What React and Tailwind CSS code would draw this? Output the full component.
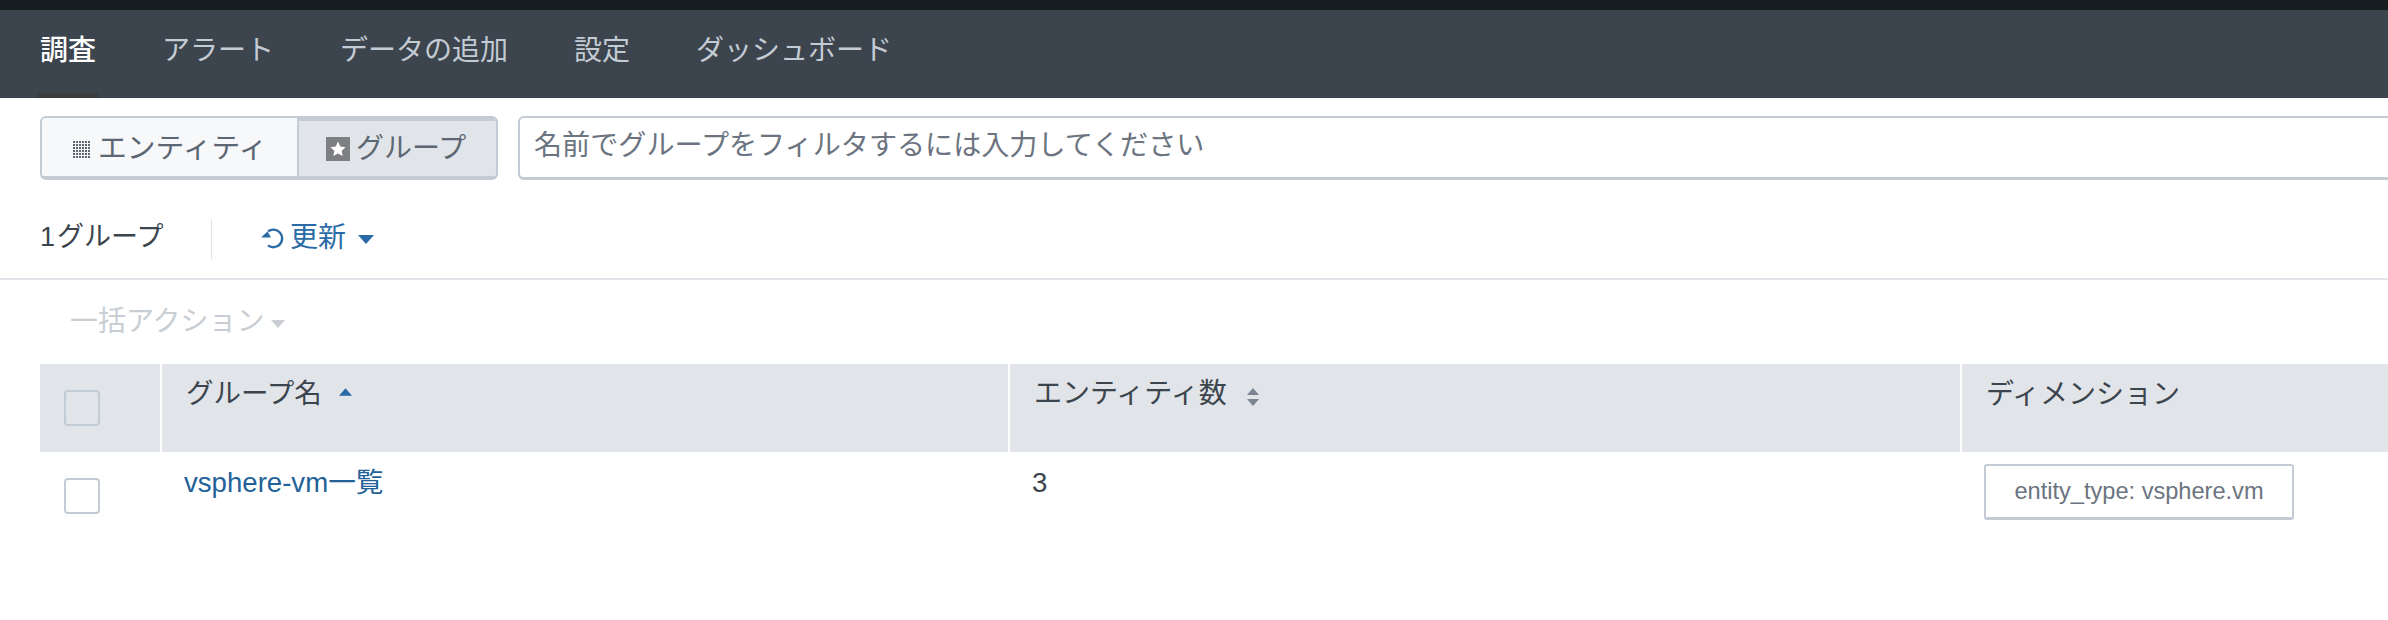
const font = { fontFamily: '"Liberation Sans", "Noto Sans CJK JP", sans-serif' };

function Caret({ className }) {
  return (
    <svg viewBox="0 0 16 9" className={className}>
      <path d="M0 0H16L8 9Z" fill="currentColor" />
    </svg>
  );
}

function GridIcon() {
  const dots = [];
  for (let y = 0; y < 6; y++) {
    for (let x = 0; x < 6; x++) {
      dots.push(<rect key={`${x}-${y}`} x={x * 3} y={y * 3} width="2" height="2" fill="#5c6773" />);
    }
  }
  return (
    <svg viewBox="0 0 17 17" className="w-[17px] h-[17px] shrink-0">
      {dots}
    </svg>
  );
}

function StarIcon() {
  return (
    <svg viewBox="0 0 24 24" className="w-6 h-6 shrink-0">
      <rect width="24" height="24" fill="#7d7f82" />
      <path d="M12 4.6l2.3 4.9 5.3.7-3.9 3.6 1 5.3-4.7-2.6-4.7 2.6 1-5.3-3.9-3.6 5.3-.7z" fill="#ffffff" />
    </svg>
  );
}

function RefreshIcon() {
  return (
    <svg viewBox="0 0 24 24" className="w-[24px] h-[24px] shrink-0" fill="none">
      <path d="M7 5.4A8.8 8.8 0 1 1 7 19.4" stroke="#2a6aa6" strokeWidth="2.4" />
      <path d="M0 11.5H10L6.5 5.5Z" fill="#2a6aa6" />
    </svg>
  );
}

function SortBoth() {
  return (
    <svg viewBox="0 0 12 18" className="w-[12px] h-[18px] ml-[20px] shrink-0">
      <path d="M6 0L12 7H0Z" fill="#7b8592" />
      <path d="M6 18L12 11H0Z" fill="#7b8592" />
    </svg>
  );
}

function Checkbox({ header }) {
  return (
    <div
      className={`w-9 h-9 rounded-[4px] border-2 border-[#c3cbd4] ${header ? "bg-[#e1e4e8]" : "bg-white"}`}
    />
  );
}

export default function App() {
  return (
    <div className="w-[2388px] h-[620px] bg-white overflow-hidden text-[#3c444d]" style={font}>
      <div className="h-[10px] bg-[#171d21]" />
      <nav className="h-[88px] bg-[#3c444d] flex items-start pl-[40px] gap-[66px] text-[28px] leading-[40px] pt-[21px] text-[#c3cbd4]">
        <div className="relative text-white font-medium">
          調査
          <div className="absolute left-[-2px] right-[-2px] top-[62px] h-[5px] bg-[#3c3c3c]" />
        </div>
        <div>アラート</div>
        <div>データの追加</div>
        <div>設定</div>
        <div>ダッシュボード</div>
      </nav>

      <div className="flex pl-[40px] mt-[18px] gap-[20px] mr-[-20px]">
        <div className="flex w-[458px] h-[64px] rounded-[6px] border-2 border-b-[4px] border-[#c3cbd4] overflow-hidden shrink-0 text-[#5c6773]">
          <div className="w-[257px] bg-[#f7f8fa] flex items-start pt-[11px] pl-[31px] gap-[8px] border-r-2 border-[#c3cbd4] text-[28.8px]">
            <div className="mt-[12px]"><GridIcon /></div>
            <span className="leading-[38px]">エンティティ</span>
          </div>
          <div className="flex-1 bg-[#e1e4e8] border-t-[3px] border-[#c3cbd4] flex items-start pt-[10px] pl-[27px] gap-[6px] text-[28px]">
            <div className="mt-[6px]"><StarIcon /></div>
            <span className="leading-[36px]">グループ</span>
          </div>
        </div>
        <div className="flex-1 h-[64px] rounded-[6px] border-2 border-b-[3px] border-[#c3cbd4] pl-[14px] pt-[9px] text-[28.1px] leading-[38px] text-[#6b7480]">
          名前でグループをフィルタするには入力してください
        </div>
      </div>

      <div className="flex items-center h-[100px] pt-[18px] pl-[40px] border-b-2 border-[#e1e4e8] text-[28px]">
        <div className="text-[#3c444d] w-[171px] leading-[40px] pb-[2px] text-[27px]">
          1<span className="ml-[2px]">グループ</span>
        </div>
        <div className="w-px h-[40px] bg-[#dfe2e6] mt-[2px]" />
        <div className="flex items-center ml-[49px] text-[#2a6aa6]">
          <RefreshIcon />
          <span className="ml-[5px] leading-[40px]">更新</span>
          <Caret className="w-4 h-[9px] ml-[12px] mt-[3px]" />
        </div>
      </div>

      <div className="flex items-center h-[84px] pl-[70px] text-[28px] text-[#c9ced4]">
        <span className="leading-[40px]">一括アクション</span>
        <Caret className="w-[14px] h-2 ml-[6px] mt-[3px]" />
      </div>

      <div className="ml-[40px] grid grid-cols-[120px_848px_952px_1fr] h-[88px] bg-[#e1e4e8] text-[28px]">
        <div className="flex pl-[24px] pt-[26px]"><Checkbox header /></div>
        <div className="border-l-2 border-white pl-[24px] pt-[10px] flex items-start">
          <span className="leading-[40px] text-[27.5px]">グループ名</span>
          <Caret className="w-[13px] h-[8px] ml-[17px] mt-[14px] rotate-180 text-[#2a6aa6]" />
        </div>
        <div className="border-l-2 border-white pl-[24px] pt-[10px] flex items-start">
          <span className="leading-[40px]">エンティティ数</span>
          <div className="mt-[14px]"><SortBoth /></div>
        </div>
        <div className="border-l-2 border-white pl-[24px] pt-[10px]">
          <span className="leading-[40px]">ディメンション</span>
        </div>
      </div>

      <div className="ml-[40px] grid grid-cols-[120px_848px_952px_1fr] text-[27.6px]">
        <div className="flex pl-[24px] pt-[26px]"><Checkbox /></div>
        <div className="pl-[24px] pt-[11px] leading-[40px] text-[#236299]">vsphere-vm一覧</div>
        <div className="pl-[24px] pt-[11px] leading-[40px]">3</div>
        <div className="pl-[24px] pt-[12px]">
          <div className="w-[310px] h-[56px] rounded-[3px] border-2 border-b-[3px] border-[#c3cbd4] flex items-center justify-center text-[23.6px] text-[#6b7480]">
            entity_type: vsphere.vm
          </div>
        </div>
      </div>
    </div>
  );
}
